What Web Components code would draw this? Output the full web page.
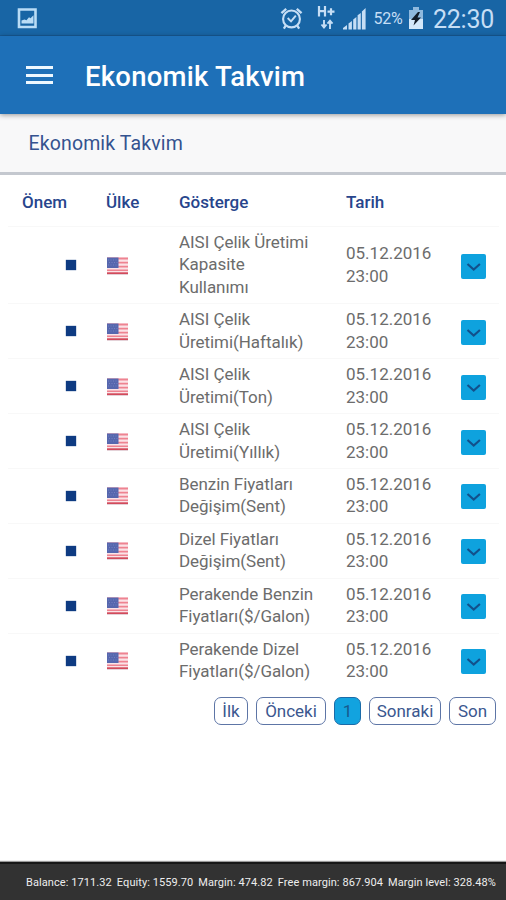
<!DOCTYPE html>
<html lang="tr">
<head>
<meta charset="utf-8">
<title>Ekonomik Takvim</title>
<style>
html,body{margin:0;height:100%;background:#fff;overflow:hidden}
body{font-family:Roboto,"Liberation Sans",sans-serif}
</style>
</head>
<body>
<calendar-app></calendar-app>
<script>
const define = (name, html) => customElements.define(name, class extends HTMLElement {
  connectedCallback() {
    if (this.shadowRoot) return;
    this.attachShadow({mode: 'open'}).innerHTML = html;
  }
});

define('status-bar', `
<style>
:host{display:flex;align-items:center;height:36px;background:#1865a5;color:#c6def5;box-sizing:border-box;padding:0 12px 0 17px;border-bottom:1px solid #175b97}
svg{display:block;flex:none}
.space{flex:1}
.pct{font-size:16px;margin-left:7.500px;width:34px;letter-spacing:-.2px;line-height:36px;padding-top:3px;white-space:nowrap}
.time{font-size:25px;line-height:36px;margin-left:9.500px;width:61px;letter-spacing:-.25px;padding-top:4px;white-space:nowrap}
</style>
<svg width="21" height="22" viewBox="0 0 21 22"><path fill="none" stroke="#b9dcf6" stroke-width="2.600" d="M2 2.500h16.500v17.500H2z"/><path fill="#b9dcf6" d="M4.500 16.500v-3l3-1 2 .8 2.500-3 1.500 1 3-3v8.200z"/></svg>
<span class="space"></span>
<svg width="23" height="24" viewBox="0 0 24 24" fill="none" stroke="#c6def5"><circle cx="12" cy="13" r="8.800" stroke-width="2.200"/><path stroke-width="2" d="M8 12l3.500 3.500 5-6"/><path stroke-width="2.400" d="M1.500 7l5-4.500M22.500 7l-5-4.500M6 20l-2 3M18 20l2 3"/></svg>
<svg style="margin-left:14px" width="18" height="26" viewBox="0 0 18 26" fill="none" stroke="#c6def5"><path stroke-width="2.200" d="M2 1v10.500M8 1v10.500M2 6.200h6M10.500 6.700h7M14 3.200v7"/><path stroke-width="1.900" d="M7 15v7M4.500 19.500l2.500 3 2.500-3M13 24v-8M10.500 18.700l2.500-3 2.500 3"/></svg>
<svg style="margin-left:8px" width="23" height="24" viewBox="0 0 23 24" fill="#c6def5"><path d="M0 23.500v-1.500l4-3v4.500zM5.500 23.500v-6l3.400-2.500v8.500zM10.200 23.500V13.500l3.200-2.500v12.500zM14.600 23.500V9.200L17.800 7v16.500zM18.900 23.500V5.500L22.600 2v21.500z"/></svg>
<span class="pct">52%</span>
<svg width="16" height="24" viewBox="0 0 16 24"><path fill="#8fb9de" d="M5 1h6v3h4v9H1V4h4z"/><path fill="#d3e8fa" d="M1 13h14v10H1z"/><path fill="#111b28" d="M10 6L3 14h4l-1.500 5.500L13 11.500H9.500L12 6z"/></svg>
<span class="time">22:30</span>`);

define('app-bar', `
<style>
:host{display:flex;align-items:center;height:78px;background:#1e70b8;box-sizing:border-box;padding:0 26px;box-shadow:0 1px 5px rgba(0,0,0,.4);position:relative;color:#fff}
.menu{width:27px;display:grid;gap:4.500px;margin:0 32px 0 0}
i{height:3px;background:#eef8ff}
h1{margin:0;font-size:27.500px;font-weight:500;line-height:40px;padding-top:4px;letter-spacing:.24px;white-space:nowrap}
</style>
<div class="menu"><i></i><i></i><i></i></div><h1><slot></slot></h1>`);

define('section-title', `
<style>
:host{display:block;height:61px;box-sizing:border-box;background:#f8f8f9;border-bottom:3px solid #c4c8cf;padding:1px 0 0 28.500px;font-size:19.500px;line-height:58px;color:#34528f;letter-spacing:.13px}
</style><slot></slot>`);

define('importance-mark', `<style>:host{display:block;width:10px;height:10px;background:#0e3b82;box-shadow:0 0 1px #0e3b82}</style>`);

define('us-flag', `
<style>:host{display:block;width:21px;height:18px}svg{display:block}</style>
<svg width="21" height="18" viewBox="0 0 21 18"><path fill="#fbe3e7" d="M0 .5h21v16.500H0z"/><path fill="#ee8391" d="M0 .5h21v2H0zM0 4.700h21v1.900H0zM0 8.700h21v1.900H0zM0 12.500h21v1.500H0z"/><path fill="#d24a5b" d="M0 15.300h21V17H0z"/><path fill="#5667ae" d="M0 .5h11.500v10.500H0z"/><path stroke="#7280c0" stroke-width="1" stroke-dasharray="1 1.500" d="M1 3h10M2 5.500h9M1 8h10"/><path fill="#d9bfc7" d="M0 17h21v.7H0z"/></svg>`);

define('expand-button', `
<style>:host{display:block;width:25px;height:25px;border-radius:2px;background:#0ea2de}svg{display:block}</style>
<svg width="25" height="25" viewBox="0 0 25 25" fill="none" stroke="#12508b" stroke-width="2.100"><path d="M6.500 10l6.200 5.500 6.200-5.500"/></svg>`);

const columns = 'display:grid;grid-template-columns:84px 73px 167px 114px 1fr;padding-left:14px;margin:0 7px 0 8px;box-sizing:border-box;';

define('table-head', `
<style>:host{${columns}height:51px;line-height:54px;font-size:17px;font-weight:500;color:#27458c}</style>
<span>Önem</span><span>Ülke</span><span>Gösterge</span><span>Tarih</span>`);

define('indicator-row', `
<style>
:host{${columns}align-items:center;border-top:1px solid #f8f8f8;padding-top:3.950px;padding-bottom:4.950px;font-size:17px;line-height:22.500px;color:#6c6c6c;font-weight:400}
importance-mark{margin:1px 0 0 44.400px}
us-flag{margin-left:.5px;margin-top:2px}
.name{white-space:pre;letter-spacing:-.05px}
expand-button{margin:3px 0 0 .5px}
</style>
<importance-mark></importance-mark><us-flag></us-flag><div class="name"><slot></slot></div><div class="date">05.12.2016<br>23:00</div><expand-button></expand-button>`);

define('page-button', `
<style>
:host{display:block;box-sizing:border-box;height:28px;border:1.500px solid #5d75a6;border-radius:7px;text-align:center;font-size:17px;line-height:26px;color:#3b578f;background:#fff}
:host([current]){background:#12a3df;color:#17598e;border-color:#1b6ba8}
</style><slot></slot>`);

define('pagination-bar', `
<style>:host{display:flex;justify-content:flex-end;gap:8px;padding:9px 10px 0 0}</style><slot></slot>`);

define('account-bar', `
<style>
:host{display:flex;align-items:center;gap:5px;height:38px;box-sizing:border-box;background:#323232;border-top:2px solid #171717;box-shadow:0 -1px 1px #999;padding-left:26px;color:#eee;font-size:11px;letter-spacing:.08px;white-space:nowrap}
</style><slot></slot>`);

const names = ['AISI Çelik Üretimi\nKapasite\nKullanımı','AISI Çelik\nÜretimi(Haftalık)','AISI Çelik\nÜretimi(Ton)','AISI Çelik\nÜretimi(Yıllık)','Benzin Fiyatları\nDeğişim(Sent)','Dizel Fiyatları\nDeğişim(Sent)','Perakende Benzin\nFiyatları($/Galon)','Perakende Dizel\nFiyatları($/Galon)'];
define('calendar-app', `
<style>
:host{display:flex;flex-direction:column;height:900px;width:506px}
main{flex:1}
page-button{flex:none}
</style>
<status-bar></status-bar>
<app-bar>Ekonomik Takvim</app-bar>
<section-title>Ekonomik Takvim</section-title>
<main>
<table-head></table-head>
${names.map(n => `<indicator-row>${n}</indicator-row>`).join('')}
<pagination-bar><page-button style="width:34px">İlk</page-button><page-button style="width:70px">Önceki</page-button><page-button current style="width:27px">1</page-button><page-button style="width:72px">Sonraki</page-button><page-button style="width:47px">Son</page-button></pagination-bar>
</main>
<account-bar><span>Balance: 1711.32</span><span>Equity: 1559.70</span><span>Margin: 474.82</span><span>Free margin: 867.904</span><span>Margin level: 328.48%</span></account-bar>`);
</script>
</body>
</html>
